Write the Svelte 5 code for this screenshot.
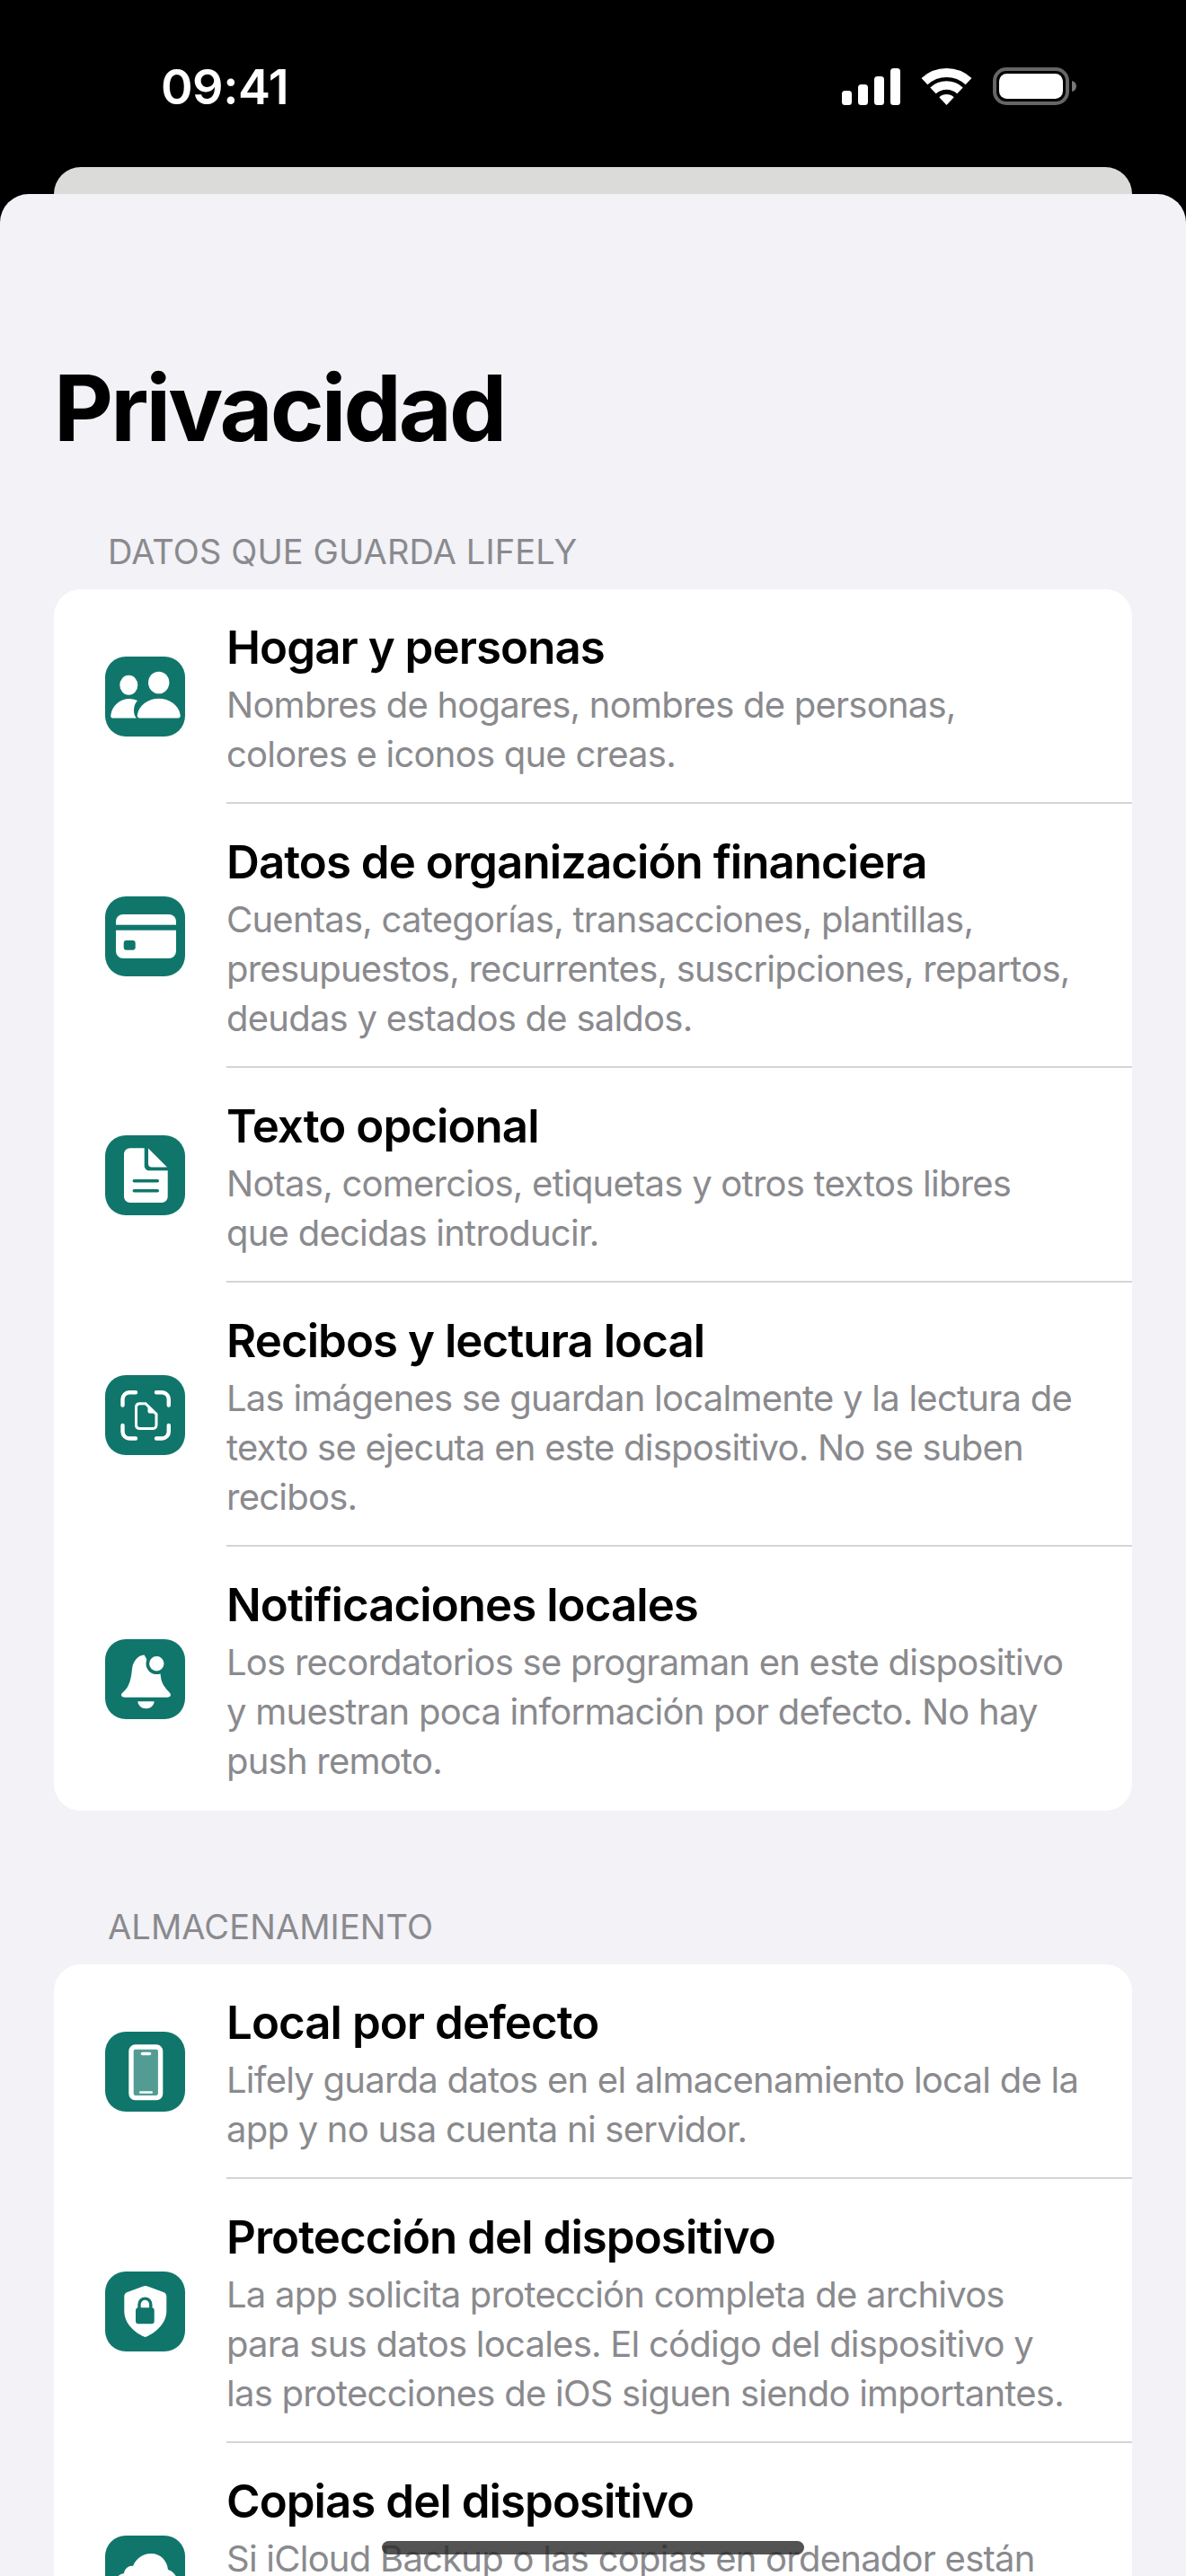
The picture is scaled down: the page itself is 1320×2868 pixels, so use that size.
<script>
  const sections = [
    { label: 'DATOS QUE GUARDA LIFELY', rows: [
      { icon: 'people', title: 'Hogar y personas', lines: ['Nombres de hogares, nombres de personas,', 'colores e iconos que creas.'] },
      { icon: 'card', title: 'Datos de organización financiera', lines: ['Cuentas, categorías, transacciones, plantillas,', 'presupuestos, recurrentes, suscripciones, repartos,', 'deudas y estados de saldos.'] },
      { icon: 'doc', title: 'Texto opcional', lines: ['Notas, comercios, etiquetas y otros textos libres', 'que decidas introducir.'] },
      { icon: 'scan', title: 'Recibos y lectura local', lines: ['Las imágenes se guardan localmente y la lectura de', 'texto se ejecuta en este dispositivo. No se suben', 'recibos.'] },
      { icon: 'bell', title: 'Notificaciones locales', lines: ['Los recordatorios se programan en este dispositivo', 'y muestran poca información por defecto. No hay', 'push remoto.'] }
    ]},
    { label: 'ALMACENAMIENTO', rows: [
      { icon: 'phone', title: 'Local por defecto', lines: ['Lifely guarda datos en el almacenamiento local de la', 'app y no usa cuenta ni servidor.'] },
      { icon: 'shield', title: 'Protección del dispositivo', lines: ['La app solicita protección completa de archivos', 'para sus datos locales. El código del dispositivo y', 'las protecciones de iOS siguen siendo importantes.'] },
      { icon: 'cloud', title: 'Copias del dispositivo', lines: ['Si iCloud Backup o las copias en ordenador están'] }
    ]}
  ];
</script>

<div class="screen">
  <header class="status">
    <span class="time">09:41</span>
    <div class="indicators">
      <svg class="signal" viewBox="0 0 65 41" width="65" height="41" aria-hidden="true">
        <rect x="0" y="25" width="11" height="16" rx="3.5" />
        <rect x="18" y="18" width="11" height="23" rx="3.5" />
        <rect x="36" y="9" width="11" height="32" rx="3.5" />
        <rect x="54" y="0" width="11" height="41" rx="3.5" />
      </svg>
      <svg class="wifi" viewBox="0 0 57 41" width="57" height="41" aria-hidden="true">
        <path d="M3.95 14.7A36 36 0 0 1 53.05 14.7" fill="none" stroke="#fff" stroke-width="10" />
        <path d="M13.5 24.9A22 22 0 0 1 43.5 24.9" fill="none" stroke="#fff" stroke-width="9.5" />
        <path d="M28.5 41L20.3 32.2A12 12 0 0 1 36.7 32.2Z" fill="#fff" />
      </svg>
      <svg class="battery" viewBox="0 0 93 42" width="93" height="42" aria-hidden="true">
        <rect x="2" y="2" width="81" height="38" rx="13" fill="none" stroke="#666" stroke-width="4" />
        <rect x="7" y="7" width="71" height="28" rx="8.5" fill="#fff" />
        <path d="M88 15c3 .6 5 3 5 6s-2 5.4-5 6z" fill="#777" />
      </svg>
    </div>
  </header>

  <div class="backcard"></div>

  <main class="sheet">
    <h1>Privacidad</h1>
    {#each sections as section}
      <section>
        <h2>{section.label}</h2>
        <ul class="card">
          {#each section.rows as row}
            <li class="row">
              <svg class="icon" viewBox="0 0 89 89" width="89" height="89" aria-hidden="true">
                <rect width="89" height="89" rx="23" fill="#10766b" />
                {#if row.icon === 'people'}
                  <ellipse cx="26.3" cy="31.7" rx="10" ry="11" fill="#fff" />
                  <ellipse cx="59.7" cy="29" rx="11.7" ry="12.3" fill="#fff" />
                  <path d="M8.5 68.5C6.5 68.5 6 67 6.3 65 8 54 17 47 27 47 30 47 33 47.7 36 49 33 52 32 56 32 60 32 64 33 66.5 35 68.5Z" fill="#fff" />
                  <path d="M38.5 68.5C36.5 68.5 35.5 67 35.8 65 37.5 54 48 46.7 59.7 46.7 71.5 46.7 82 54 83.7 65 84 67 83 68.5 81 68.5Z" fill="#fff" />
                {:else if row.icon === 'card'}
                  <rect x="12" y="20" width="67" height="49" rx="8" fill="#fff" />
                  <rect x="12" y="31.7" width="67" height="6" fill="#10766b" />
                  <rect x="20.7" y="49" width="13" height="10.7" rx="3" fill="#10766b" />
                {:else if row.icon === 'doc'}
                  <path d="M28 14.3H43.7V33.5C43.7 37 46 39.3 49.5 39.3H69.7V68C69.7 72 66.7 75 62.7 75H28C24 75 21 72 21 68V21.3C21 17.3 24 14.3 28 14.3Z" fill="#fff" />
                  <path d="M48 14.5L69 35.5H52C49.5 35.5 48 34 48 31.5Z" fill="#fff" />
                  <path d="M32.3 50.7H58.3M32.3 61.7H58.3" stroke="#10766b" stroke-width="3.5" stroke-linecap="round" fill="none" />
                {:else if row.icon === 'scan'}
                  <g fill="none" stroke="#fff" stroke-linecap="round" stroke-width="4.4">
                    <path d="M34 19.3H27A7.5 7.5 0 0 0 19.5 26.8V33.5" />
                    <path d="M57 19.3H63.3A7.5 7.5 0 0 1 70.8 26.8V33.5" />
                    <path d="M19.5 56V63A7.5 7.5 0 0 0 27 70.5H34" />
                    <path d="M70.8 56V63A7.5 7.5 0 0 1 63.3 70.5H57" />
                  </g>
                  <path d="M38 31.7H45L57 43.5V55.5A4 4 0 0 1 53 59.5H38A4 4 0 0 1 34.5 55.5V35.5A4 4 0 0 1 38 31.7Z" fill="none" stroke="#fff" stroke-width="3" />
                  <path d="M47.5 33L56.5 42.5H49.5A2 2 0 0 1 47.5 40.5Z" fill="#fff" />
                {:else if row.icon === 'bell'}
                  <path d="M43.5 17.5C36 18 31 25 30 33 29 44 27 52 22 57 19 60 17.5 61 18 62.5 18.5 64 20 64.7 22 64.7H69C71 64.7 73 64 73 62 73 60 70 58 67 54 63 49 62 44 61.5 38L50 30 45 20Z" fill="#fff" />
                  <circle cx="57.3" cy="27.3" r="10" fill="#fff" stroke="#10766b" stroke-width="3.6" />
                  <path d="M36.3 69.3H54.7A9.2 8 0 0 1 36.3 69.3Z" fill="#fff" />
                {:else if row.icon === 'phone'}
                  <rect x="29" y="17" width="32.6" height="56.6" rx="4.5" fill="#fff" fill-opacity=".28" stroke="#fff" stroke-width="5.4" />
                  <rect x="39.7" y="22.7" width="11.6" height="3.6" rx="1.8" fill="#fff" />
                  <rect x="38" y="66.3" width="15" height="2.4" rx="1.2" fill="#fff" />
                {:else if row.icon === 'shield'}
                  <path d="M44.8 16C46 16 47 16.3 48 16.7L65 23C67 23.7 68.3 25 68.3 28V44C68.3 58 56 68 46 72.6 45 73.1 44 73.1 43.4 72.6 33 68 21.3 58 21.3 44V28C21.3 25 22.6 23.7 24.6 23L41.6 16.7C42.6 16.3 43.6 16 44.8 16Z" fill="#fff" />
                  <rect x="34" y="40.3" width="20.7" height="18" rx="3" fill="#10766b" />
                  <path d="M38 41V36.5A6.4 6.4 0 0 1 50.8 36.5V41" fill="none" stroke="#10766b" stroke-width="3.4" />
                {:else if row.icon === 'cloud'}
                  <path d="M24 68C14 68 10 61 10 55 10 48 15 43 21 42 22 36 27 33 31 34 34 26 42 20 51 20 62 20 69 28 70 38 77 40 81 47 81 53 81 62 74 68 66 68Z" fill="#fff" />
                {/if}
              </svg>
              <div class="text">
                <h3>{row.title}</h3>
                <p>
                  {#each row.lines as line}
                    <span>{line}</span>
                  {/each}
                </p>
              </div>
            </li>
          {/each}
        </ul>
      </section>
    {/each}
  </main>

  <div class="home"></div>
</div>

<style>
  :global(body) {
    margin: 0;
    background: #000;
  }
  .screen {
    position: relative;
    width: 1320px;
    height: 2868px;
    overflow: hidden;
    background: #000;
    font-family: Inter, "Liberation Sans", sans-serif;
  }
  .status {
    height: 186px;
    box-sizing: border-box;
    padding: 76px 122px 0 179px;
    display: flex;
    justify-content: space-between;
    align-items: flex-start;
  }
  .time {
    color: #fff;
    font-size: 54px;
    font-weight: 600;
    line-height: 42px;
    letter-spacing: -0.5px;
  }
  .indicators {
    display: flex;
    align-items: flex-start;
    gap: 23px;
    margin-left: auto;
  }
  .indicators svg {
    display: block;
  }
  .battery {
    margin-top: -1px;
  }
  .signal {
    fill: #fff;
  }
  .backcard {
    height: 30px;
    margin: 0 60px;
    background: #dbdbd9;
    border-radius: 30px 30px 0 0;
  }
  .sheet {
    height: 2652px;
    box-sizing: border-box;
    padding: 176px 60px 0;
    background: #f2f2f7;
    border-radius: 32px 32px 0 0;
  }
  h1 {
    margin: 0 0 75px;
    font-size: 102px;
    font-weight: 700;
    line-height: 124px;
    letter-spacing: -2.95px;
    color: #000;
  }
  section {
    margin-bottom: 106px;
  }
  h2 {
    margin: 0 0 19px 60px;
    font-size: 38px;
    font-weight: 400;
    line-height: 46px;
    letter-spacing: 0.1px;
    color: #8a8a8e;
  }
  .card {
    margin: 0;
    padding: 0;
    list-style: none;
    background: #fff;
    border-radius: 30px;
  }
  .row {
    display: flex;
    align-items: center;
    gap: 46px;
    padding-left: 57px;
  }
  .icon {
    flex: none;
    display: block;
  }
  .text {
    flex: 1;
    padding: 34px 0 26px;
    border-bottom: 2px solid #d5d5d7;
  }
  .row:last-child .text {
    border-bottom: 0;
    padding-bottom: 28px;
    min-height: 232px;
  }
  h3 {
    margin: 0 0 5px;
    font-size: 51px;
    font-weight: 600;
    line-height: 62px;
    letter-spacing: -0.95px;
    color: #000;
  }
  p {
    margin: 0;
    font-size: 40px;
    font-weight: 400;
    line-height: 55px;
    letter-spacing: -0.76px;
    color: #8a8a8e;
  }
  p span {
    display: block;
    white-space: nowrap;
  }
  .home {
    position: absolute;
    left: 425px;
    top: 2829px;
    width: 470px;
    height: 15px;
    border-radius: 8px;
    background: rgba(40, 40, 40, 0.8);
  }
</style>
